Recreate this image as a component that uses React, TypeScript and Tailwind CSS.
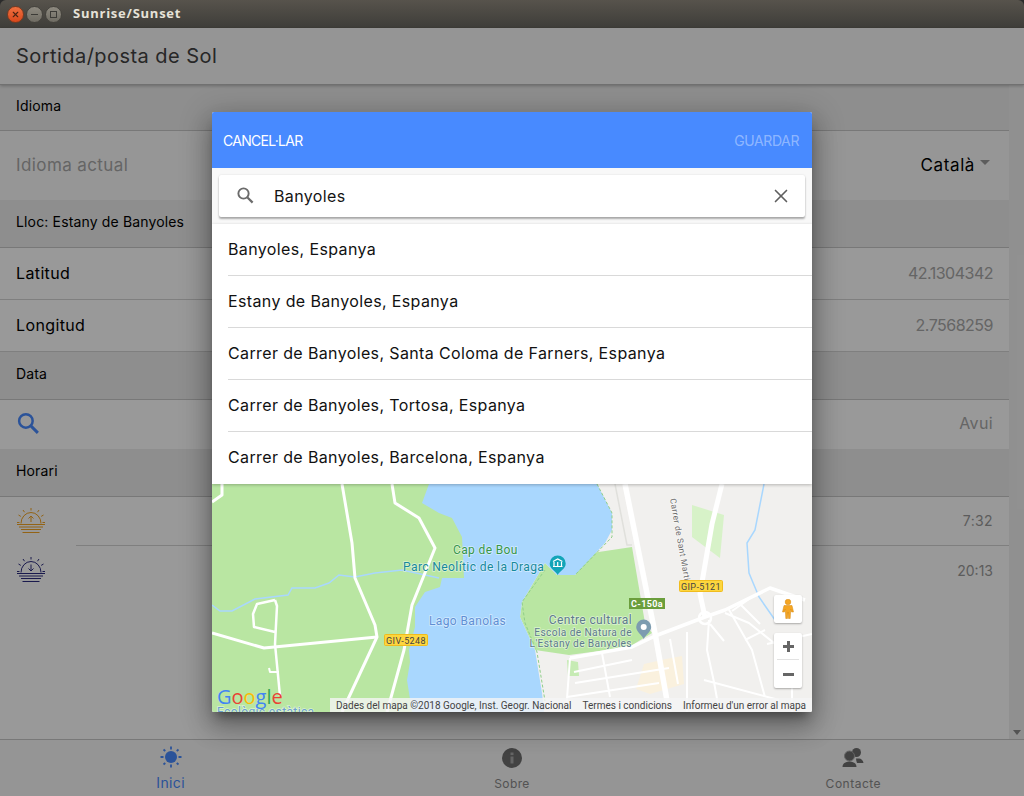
import React from "react";
import { X } from "lucide-react";

const results = [
    "Banyoles, Espanya",
    "Estany de Banyoles, Espanya",
    "Carrer de Banyoles, Santa Coloma de Farners, Espanya",
    "Carrer de Banyoles, Tortosa, Espanya",
    "Carrer de Banyoles, Barcelona, Espanya",
];

const SearchIcon: React.FC<{ size: number; className?: string }> = ({ size, className }) => (
    <svg width={size} height={size} viewBox="0 0 24 24" className={className} fill="none" stroke="currentColor">
        <circle cx="9.5" cy="9.5" r="6.5" strokeWidth="2.4" />
        <path d="M14.5 14.5L21 21" strokeWidth="2.8" />
    </svg>
);

const SunHorizon: React.FC<{ color: string; down?: boolean }> = ({ color, down }) => (
    <svg width="30" height="28" viewBox="0 0 30 28" fill="none" stroke={color} strokeWidth="1">
        <path d="M5 16.500a10 11 0 0 1 20 0" />
        <path d="M15 1v2.500M7 3l1.500 2.200M23 3l-1.500 2.200M2.500 8l2.300 1.400M27.500 8l-2.300 1.400M1 15.500h2.500M26.500 15.500H29" />
        <path d="M1 17.500h28M3 20h24M5 22.500h20M6.500 25.500h17" />
        {down ? <path d="M15 8.500v6M12.500 12.500l2.500 2.500 2.500-2.500" /> : <path d="M15 15V9M12.500 11.500L15 9l2.500 2.500" />}
    </svg>
);

const SectionRow: React.FC<{ label: string; h: string }> = ({ label, h }) => (
    <div className={`${h} flex items-center pl-4 pb-[4px] bg-[#ededed] border-b border-[#c8c8c8] text-[14px] tracking-[0.15px] text-black`}>{label}</div>
);

const ValueRow: React.FC<{ label: string; value: string }> = ({ label, value }) => (
    <div className="h-[52px] flex items-center justify-between px-4 pb-[2px] border-b border-[#d4d4d4] text-[16px]">
        <span className="text-black">{label}</span>
        <span className="text-[#a8a8a8] tracking-[-0.5px]">{value}</span>
    </div>
);

const MapArt: React.FC = () => (
    <svg viewBox="0 0 600 228" width="600" height="228" className="block">
        <rect width="600" height="228" fill="#f1f0ee" />
        {/* green on the left of the lake */}
        <path d="M0 0H262V110H220V228H0Z" fill="#b9e6a2" />
        <path d="M333 79L345 91H363L380 69L420 63L433 139L440 149L417 163L357 171L323 166L308 133L310 118Z" fill="#b9e6a2" />
        <path d="M217 0H385L400 29V46L393 59L363 91H345L333 79L310 118L308 133L323 166L330 209L332 228H200L195 196L198 178L197 166L203 143L203 123L213 108L228 103L230 94H252L250 53L240 34L227 29L210 19Z" fill="#a9d7fe" />
        <path d="M480 21L512 31L508 74L480 53Z" fill="#d7f2c8" />
        <path d="M355 176L366 178L367 192L356 192Z" fill="#c6ebb4" />
        <path d="M432 180L454 175L470 172L472 200L438 210L424 205Z" fill="#faf1de" />

        {/* rivers */}
        <g fill="none" stroke="#a9d7fe" strokeWidth="1.5">
            <path d="M0 121L8 127H20L43 115L76 111L80 104H103L117 99L127 91L143 93L163 89L190 86L227 94" />
            <path d="M552 0L543 46L535 59L537 89L547 113L563 136" />
        </g>

        {/* dashed park path */}
        <g fill="none" stroke="#8fcf8a" strokeWidth="1" strokeDasharray="3 2">
            <path d="M385 0L400 29V53L363 91" />
            <path d="M333 86L310 118L313 139L325 168L333 217" />
        </g>

        {/* roads */}
        <g fill="none" stroke="#ffffff" strokeWidth="3" strokeLinejoin="round">
            <path d="M130 0L140 59L143 94L163 141L165 153L130 228" />
            <path d="M180 0L183 19L207 34L223 64L200 121L192 166L175 228" />
            <path d="M0 149L52 164L165 153" />
            <path d="M63 116L45 120L41 130L42 143L63 148M63 116L65 122L63 160L68 212" strokeWidth="2.5" />
            <path d="M0 18L10 11V0" />
            <path d="M57 184L58 188L67 188" strokeWidth="2" />
            <path d="M413 0L443 149L457 228" strokeWidth="5.5" />
            <path d="M403 0L415 61H420" strokeWidth="1.5" stroke="#e0e0dc" />
            <path d="M510 0L500 40L488 110L493 133" strokeWidth="5" />
            <path d="M358 174L420 163L443 152L493 133L513 126L558 104L593 116" strokeWidth="3.5" />
            <path d="M358 174L354 228M362 188L420 176M363 199L457 184M355 213L447 199M390 169L398 213M458 155L466 200M475 148V228" strokeWidth="2" />
            <path d="M497 136L495 166L502 198L507 226M513 129L537 139L567 163L580 196V228M516 124L540 166L553 213M492 196L567 216M533 156L553 146M540 113L520 127M528 120L548 140M555 160L600 150M498 140L512 157" strokeWidth="2" />
            <circle cx="493" cy="134" r="6" strokeWidth="2.5" />
        </g>

        {/* labels */}
        <g fontFamily="Roboto, sans-serif" paintOrder="stroke" stroke="#ffffff" strokeOpacity="0.5" strokeWidth="1.5">
            <text x="241" y="70" fontSize="12" fill="#36964a">Cap de Bou</text>
            <text x="191" y="87" fontSize="12.100" fill="#16899c">Parc Neolític de la Draga</text>
            <text x="217" y="141" fontSize="12" fill="#5f8fd4">Lago Banolas</text>
            <text x="420" y="140" textAnchor="end" fontSize="12" fill="#5d7b8c">Centre cultural</text>
            <text x="420" y="152" textAnchor="end" fontSize="10.200" fill="#5d7b8c">Escola de Natura de</text>
            <text x="420" y="163" textAnchor="end" fontSize="10.200" fill="#5d7b8c">L'Estany de Banyoles</text>
            <text transform="translate(458 15) rotate(80)" fontSize="8.500" fill="#6e6e6e">Carrer de Sant Martirià</text>
            <text x="5" y="232" fontSize="12" fill="#6a9fd0">Ecològic estàtica</text>
        </g>

        {/* pins */}
        <path d="M345.7 91c-2-4-8-6-8-11.500a8 8 0 0 1 16 0c0 5.500-6 7.500-8 11.500Z" fill="#12a5b8" />
        <path d="M341 82.500h9.500M342 82v-4M345.700 82v-4M349.500 82v-4M341 77.500l4.700-2.500 4.700 2.500" stroke="#ffffff" strokeWidth="1.200" fill="none" />
        <path d="M431.700 155c-2-4.500-7.500-7-7.500-12a7.500 7.500 0 0 1 15 0c0 5-5.500 7.500-7.500 12Z" fill="#7d9cb0" />
        <circle cx="431.700" cy="143" r="3" fill="#ffffff" />

        {/* road shields */}
        <g fontFamily="Roboto, sans-serif" fontSize="9" textAnchor="middle">
            <rect x="172.500" y="150.500" width="43" height="11" rx="1" fill="#fdd63e" stroke="#f0bc1e" />
            <text x="194" y="159.500" fill="#444">GIV-5248</text>
            <rect x="467.500" y="96.500" width="43" height="11" rx="1" fill="#fdd63e" stroke="#f0bc1e" />
            <text x="489" y="105.500" fill="#444">GIP-5121</text>
            <rect x="417" y="114" width="36" height="11" fill="#6b9e3c" />
            <text x="435" y="123" fill="#ffffff" fontWeight="700">C-150a</text>
        </g>
    </svg>
);

const App: React.FC = () => {
    return (
        <div className="relative h-[796px] w-[1024px] overflow-hidden bg-[#2b2b2b] font-[Inter,sans-serif] tracking-[0.37px] flex flex-col">
            {/* window title bar */}
            <div className="h-[28px] shrink-0 rounded-t-[6px] bg-gradient-to-b from-[#57534c] to-[#3e3d39] flex items-center pl-[7px]">
                <div className="w-[17px] h-[17px] rounded-full bg-gradient-to-b from-[#f0703f] to-[#d9471a] flex items-center justify-center border border-[#7a3a20]">
                    <X size={9} strokeWidth={3} className="text-[#4a2413]" />
                </div>
                <div className="ml-[2px] w-[17px] h-[17px] rounded-full bg-gradient-to-b from-[#8e8a80] to-[#6f6c63] flex items-center justify-center border border-[#45433d]">
                    <div className="w-[7px] h-[1px] bg-[#3c3b37]" />
                </div>
                <div className="ml-[2px] w-[17px] h-[17px] rounded-full bg-gradient-to-b from-[#8e8a80] to-[#6f6c63] flex items-center justify-center border border-[#45433d]">
                    <div className="w-[7px] h-[7px] border border-[#3c3b37]" />
                </div>
                <span className="ml-[11px] font-['Open_Sans',sans-serif] font-bold text-[13px] tracking-[0.75px] text-[#e6e2d8]">Sunrise/Sunset</span>
            </div>

            {/* page */}
            <div className="flex-1 flex flex-col bg-white min-h-0">
                <div className="h-[57px] shrink-0 flex items-center pl-4 bg-[#f8f8f8] border-b border-[#bdbdbd] shadow-[0_1px_3px_rgba(0,0,0,0.25)] text-[20px] text-[#424242] tracking-[0.45px] z-[1]">
                    Sortida/posta de Sol
                </div>
                <div className="flex-1 flex min-h-0">
                    <div className="flex-1 min-w-0">
                        <SectionRow label="Idioma" h="h-[46px]" />
                        <div className="h-[69px] flex items-center justify-between pl-4 pr-[19px] bg-[#fbfbfb] text-[17px]">
                            <span className="text-[#a8a8a8] tracking-[0.4px]">Idioma actual</span>
                            <span className="flex items-center text-black tracking-[0.6px]">
                                Català
                                <span className="ml-[5px] mb-[6px] w-0 h-0 border-x-[5px] border-x-transparent border-t-[5px] border-t-[#999999]" />
                            </span>
                        </div>
                        <SectionRow label="Lloc: Estany de Banyoles" h="h-[48px]" />
                        <ValueRow label="Latitud" value="42.1304342" />
                        <ValueRow label="Longitud" value="2.7568259" />
                        <SectionRow label="Data" h="h-[48px]" />
                        <div className="h-[49px] flex items-center justify-between px-4 pb-[3px] text-[16px]">
                            <SearchIcon size={25} className="text-[#488aff]" />
                            <span className="text-[#a8a8a8]">Avui</span>
                        </div>
                        <SectionRow label="Horari" h="h-[48px]" />
                        <div className="h-[49px] flex items-center justify-between pl-4 pr-4 pb-[2px] text-[14px] text-[#9a9a9a] relative">
                            <SunHorizon color="#f5a623" />
                            <span>7:32</span>
                            <div className="absolute left-[76px] right-0 bottom-0 h-px bg-[#d4d4d4]" />
                        </div>
                        <div className="h-[50px] flex items-center justify-between pl-4 pr-4 pb-[2px] text-[14px] text-[#9a9a9a]">
                            <SunHorizon color="#2c2c80" down />
                            <span className="tracking-[0px]">20:13</span>
                        </div>
                    </div>
                    {/* scrollbar */}
                    <div className="w-[15px] shrink-0 bg-[#f1f1f1] flex items-end justify-center pb-[4px]">
                        <span className="w-0 h-0 border-x-[4px] border-x-transparent border-t-[5px] border-t-[#8a8a8a]" />
                    </div>
                </div>
                {/* tabs */}
                <div className="h-[57px] shrink-0 grid grid-cols-3 border-t border-[#c8c8c8] bg-[#f8f8f8]">
                    <div className="flex flex-col items-center pt-[5px] text-[#488aff]">
                        <svg width="24" height="24" viewBox="0 0 24 24" fill="currentColor" stroke="currentColor">
                            <circle cx="12" cy="12" r="6" stroke="none" />
                            <path strokeWidth="1.800" d="M12 1.500v3M12 19.500v3M1.500 12h3M19.500 12h3M4.500 4.500l1.800 1.500M19.500 4.500l-1.800 1.500M4.500 19.500l1.800-1.500M19.500 19.500l-1.800-1.500" />
                        </svg>
                        <span className="text-[14px] leading-[18px] mt-[5px]">Inici</span>
                    </div>
                    <div className="flex flex-col items-center pt-[7px]">
                        <svg width="22" height="22" viewBox="0 0 22 22">
                            <circle cx="11" cy="11" r="10" fill="#6e6e6e" />
                            <rect x="9.500" y="9.500" width="3" height="7" fill="#a8a8a8" />
                            <rect x="9.500" y="5.500" width="3" height="2.600" fill="#a8a8a8" />
                        </svg>
                        <span className="text-[12px] leading-[16px] mt-[7px] text-[#8a8a8a]">Sobre</span>
                    </div>
                    <div className="flex flex-col items-center pt-[7px] text-[#6e6e6e]">
                        <svg width="22" height="22" viewBox="0 0 22 22" fill="currentColor">
                            <circle cx="14.500" cy="5.500" r="4.500" />
                            <path d="M14 11.500h3c2 0 4 1.500 4.500 4.500H15c-.5-1.500-1-3-1-4.500Z" />
                            <circle cx="7.500" cy="9" r="5" stroke="#a8a8a8" strokeWidth="1" />
                            <path d="M0.500 20c0-3.500 3-5.500 7-5.500s7 2 7 5.500Z" />
                        </svg>
                        <span className="text-[12px] leading-[16px] mt-[7px] text-[#8a8a8a] tracking-[0.5px]">Contacte</span>
                    </div>
                </div>
            </div>

            {/* modal + backdrop */}
            <div className="absolute inset-x-0 top-[28px] bottom-0 z-[5] bg-black/40 flex justify-center pt-[84px]">
                <div className="w-[600px] h-[600px] flex flex-col bg-white rounded-[2px] overflow-hidden shadow-[0_16px_24px_2px_rgba(0,0,0,0.2),0_6px_30px_5px_rgba(0,0,0,0.2),0_8px_10px_-5px_rgba(0,0,0,0.4)]">
                    <div className="h-[56px] shrink-0 bg-[#488aff] flex items-center justify-between pl-[11px] pr-[13px] text-[14px]">
                        <span className="text-white tracking-[-0.7px]">CANCEL·LAR</span>
                        <span className="text-white/40 tracking-[-0.4px]">GUARDAR</span>
                    </div>
                    <div className="h-[56px] shrink-0 bg-[#f8f8f8] px-[7px] pt-[7px]">
                        <div className="h-[42px] bg-white rounded-[2px] shadow-[0_2px_2px_rgba(0,0,0,0.3),0_0_2px_rgba(0,0,0,0.12)] flex items-center pl-[17px] pr-[13px] pb-[1px] text-[16px] text-[#141414]">
                            <SearchIcon size={19} className="text-[#6b6b6b]" />
                            <span className="ml-[19px] flex-1">Banyoles</span>
                            <X size={22} strokeWidth={1.800} className="text-[#5f5f5f]" />
                        </div>
                    </div>
                    <div className="h-[260px] shrink-0 pl-4 z-[1] bg-white shadow-[0_1px_3px_rgba(0,0,0,0.25)]">
                        {results.map((r, i) => (
                            <div key={i} className={`h-[52px] flex items-center pb-[2px] text-[16px] text-[#111111] ${i < results.length - 1 ? "border-b border-[#d9d9d9]" : ""}`}>
                                {r}
                            </div>
                        ))}
                    </div>
                    <div className="relative flex-1 min-h-0 overflow-hidden">
                        <MapArt />
                        {/* google logo */}
                        <div className="absolute left-[5px] bottom-[3px] flex font-['Open_Sans',sans-serif] font-medium text-[20px] leading-[24px] tracking-normal">
                            <span className="text-[#4285f4]">G</span>
                            <span className="text-[#ea4335]">o</span>
                            <span className="text-[#fbbc05]">o</span>
                            <span className="text-[#4285f4]">g</span>
                            <span className="text-[#34a853]">l</span>
                            <span className="text-[#ea4335]">e</span>
                        </div>
                        {/* attribution */}
                        <div className="absolute right-0 bottom-0 h-[14px] w-[482px] bg-[#f5f5f5]/80 flex items-center justify-between px-[6px] font-[Roboto,sans-serif] text-[10px] tracking-normal text-[#444444]">
                            <span>Dades del mapa ©2018 Google, Inst. Geogr. Nacional</span>
                            <span>Termes i condicions</span>
                            <span>Informeu d'un error al mapa</span>
                        </div>
                        {/* pegman */}
                        <div className="absolute left-[562px] top-[111px] w-[28px] h-[28px] bg-white rounded-[2px] shadow-[0_1px_2px_rgba(0,0,0,0.3)] flex items-center justify-center">
                            <svg width="12" height="20" viewBox="0 0 12 20" fill="#f5a623" stroke="#d68910" strokeWidth="0.500">
                                <circle cx="6" cy="3" r="2.800" />
                                <path d="M2 6.500h8l1.500 6.500h-2l-.8-3-.5 9.500H6.500L6 13l-.5 6.500H3.800L3.300 10l-.8 3H.500Z" />
                            </svg>
                        </div>
                        {/* zoom controls */}
                        <div className="absolute left-[562px] top-[149px] w-[28px] h-[55px] bg-white rounded-[2px] shadow-[0_1px_2px_rgba(0,0,0,0.3)] flex flex-col items-center">
                            <div className="h-[27px] w-[22px] border-b border-[#e2e2e2] flex items-center justify-center">
                                <div className="relative w-[11px] h-[11px]">
                                    <div className="absolute left-0 top-[4px] w-[11px] h-[3px] bg-[#666666]" />
                                    <div className="absolute left-[4px] top-0 w-[3px] h-[11px] bg-[#666666]" />
                                </div>
                            </div>
                            <div className="h-[28px] flex items-center justify-center">
                                <div className="w-[11px] h-[3px] bg-[#666666]" />
                            </div>
                        </div>
                    </div>
                </div>
            </div>
        </div>
    );
};

export default App;
